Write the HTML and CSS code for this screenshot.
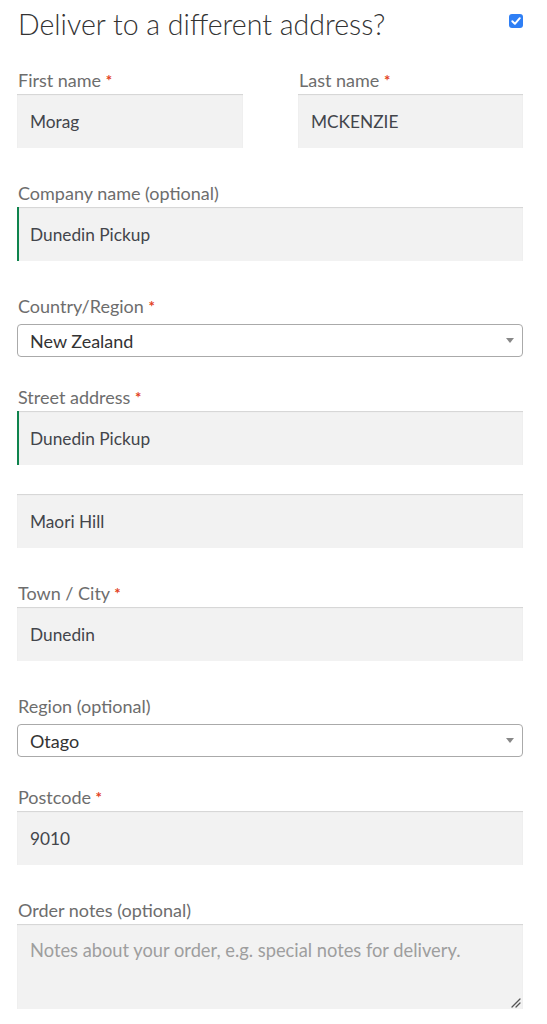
FILE: index.html
```html
<!DOCTYPE html>
<html lang="en">
<head>
<meta charset="utf-8">
<title>Deliver to a different address</title>
<link rel="stylesheet" href="styles.css">
</head>
<body>
<div class="page">
  <h3 class="title">
    <span>Deliver to a different address?</span>
    <span class="check"><svg viewBox="0 0 14 14" width="14" height="14"><rect x="0" y="0" width="14" height="14" rx="3" fill="#2f7ff5"/><path d="M3.3 7.3 L5.9 9.8 L10.8 4.2" fill="none" stroke="#fff" stroke-width="2" stroke-linecap="round" stroke-linejoin="round"/></svg></span>
  </h3>

  <div class="row two">
    <div class="field">
      <label class="lbl">First name <abbr class="req">*</abbr></label>
      <div class="input">Morag</div>
    </div>
    <div class="field">
      <label class="lbl">Last name <abbr class="req">*</abbr></label>
      <div class="input">MCKENZIE</div>
    </div>
  </div>

  <div class="row">
    <label class="lbl">Company name (optional)</label>
    <div class="input valid">Dunedin Pickup</div>
  </div>

  <div class="row sel-row">
    <label class="lbl">Country/Region <abbr class="req">*</abbr></label>
    <div class="select"><span>New Zealand</span><span class="arrow"></span></div>
  </div>

  <div class="row">
    <label class="lbl">Street address <abbr class="req">*</abbr></label>
    <div class="input valid">Dunedin Pickup</div>
  </div>

  <div class="row nolabel">
    <div class="input">Maori Hill</div>
  </div>

  <div class="row">
    <label class="lbl">Town / City <abbr class="req">*</abbr></label>
    <div class="input">Dunedin</div>
  </div>

  <div class="row sel-row">
    <label class="lbl">Region (optional)</label>
    <div class="select"><span>Otago</span><span class="arrow"></span></div>
  </div>

  <div class="row">
    <label class="lbl">Postcode <abbr class="req">*</abbr></label>
    <div class="input">9010</div>
  </div>

  <div class="row">
    <label class="lbl">Order notes (optional)</label>
    <div class="textarea"><span class="ph">Notes about your order, e.g. special notes for delivery.</span>
      <svg class="grip" viewBox="0 0 12 12" width="12" height="12"><path d="M3 11 L11 3 M7 11 L11 7" stroke="#555" stroke-width="1.3" fill="none" stroke-linecap="round"/></svg>
    </div>
  </div>
</div>
</body>
</html>
```

FILE: styles.css
```css
html, body {
  margin: 0;
  padding: 0;
  background: #fff;
}
body {
  font-family: Lato, "Open Sans", sans-serif;
  color: #6d6d6d;
}
.page {
  padding: 0 24px 0 17px;
}
.title {
  margin: 0;
  padding: 4px 0 0 1px;
  display: flex;
  justify-content: space-between;
  align-items: flex-start;
  font-size: 28.5px;
  font-weight: 300;
  line-height: 40px;
  color: #333;
}
.check {
  display: flex;
  padding-top: 10px;
}
.row {
  margin-top: 33px;
}
.row.two {
  margin-top: 24px;
  display: grid;
  grid-template-columns: 226px 225px;
  justify-content: space-between;
}
.lbl {
  display: block;
  height: 24px;
  font-size: 18px;
  line-height: 24px;
  padding-left: 1px;
  margin-bottom: 2px;
}
.req {
  color: #e2401c;
  text-decoration: none;
  font-weight: 700;
  font-size: 15px;
  line-height: 0;
  vertical-align: 1px;
}
.input {
  box-sizing: border-box;
  height: 54px;
  background: #f2f2f2;
  box-shadow: inset 0 1px 1px rgba(0,0,0,.125);
  padding: 0 13px;
  display: flex;
  align-items: center;
  font-size: 17.3px;
  color: #43454b;
}
.input.valid {
  border-left: 2px solid #0f834d;
  padding-left: 11px;
}
.row.nolabel {
  margin-top: 29px;
}
.sel-row .lbl {
  margin-bottom: 6px;
}
.sel-row + .row {
  margin-top: 28px;
}
.select {
  box-sizing: border-box;
  height: 33px;
  border: 1px solid #aaa;
  border-radius: 4px;
  background: #fff;
  padding: 0 12px;
  display: flex;
  align-items: center;
  justify-content: space-between;
  font-size: 18px;
  color: #333;
}
.arrow {
  width: 0;
  height: 0;
  border-left: 4px solid transparent;
  border-right: 4px solid transparent;
  border-top: 5px solid #888;
  margin-right: -4px;
}
.textarea {
  box-sizing: border-box;
  height: 85px;
  background: #f2f2f2;
  box-shadow: inset 0 1px 1px rgba(0,0,0,.125);
  padding: 12px 13px;
  position: relative;
  font-size: 18.3px;
  line-height: 28px;
}
.ph {
  color: #9e9e9e;
}
.grip {
  position: absolute;
  right: 2px;
  bottom: 1px;
}
```
